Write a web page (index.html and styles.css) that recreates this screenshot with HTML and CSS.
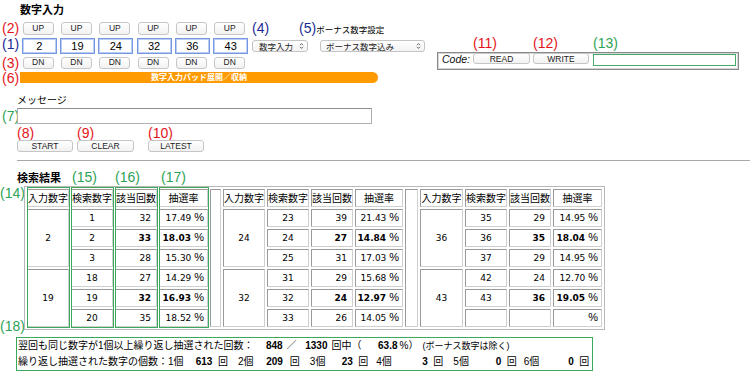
FILE: index.html
```html
<!DOCTYPE html>
<html lang="ja">
<head>
    <meta charset="UTF-8">
    <title>数字入力</title>
    <link rel="stylesheet" href="styles.css">
</head>
<body>
    <h2 class="title">数字入力</h2>
    <div class="top">
        <div class="pad">
            <span class="tag red">(2)</span>
            <button class="btn">UP</button>
            <button class="btn">UP</button>
            <button class="btn">UP</button>
            <button class="btn">UP</button>
            <button class="btn">UP</button>
            <button class="btn">UP</button>
            <span class="tag blue">(1)</span>
            <input class="num" type="text" value="2">
            <input class="num" type="text" value="19">
            <input class="num" type="text" value="24">
            <input class="num" type="text" value="32">
            <input class="num" type="text" value="36">
            <input class="num" type="text" value="43">
            <span class="tag red">(3)</span>
            <button class="btn">DN</button>
            <button class="btn">DN</button>
            <button class="btn">DN</button>
            <button class="btn">DN</button>
            <button class="btn">DN</button>
            <button class="btn">DN</button>
        </div>
        <div class="opts">
            <div class="opt-labels">
                <span class="tag blue">(4)</span>
                <span class="tag blue l5">(5)</span><span class="small">ボーナス数字設定</span>
            </div>
            <div class="opt-selects">
                <div class="select s1"><span>数字入力</span><svg width="5" height="8" viewBox="0 0 5 8"><path d="M1 3.2 2.5 1.6 4 3.2M1 4.8 2.5 6.4 4 4.8" fill="none" stroke="#555" stroke-width="0.9"/></svg></div>
                <div class="select s2"><span>ボーナス数字込み</span><svg width="5" height="8" viewBox="0 0 5 8"><path d="M1 3.2 2.5 1.6 4 3.2M1 4.8 2.5 6.4 4 4.8" fill="none" stroke="#555" stroke-width="0.9"/></svg></div>
            </div>
        </div>
        <div class="code">
            <div class="code-tags">
                <span class="tag red">(11)</span>
                <span class="tag red">(12)</span>
                <span class="tag green">(13)</span>
            </div>
            <div class="code-box">
                <i class="code-label">Code:</i>
                <button class="btn read">READ</button>
                <button class="btn write">WRITE</button>
                <input class="code-input" type="text">
            </div>
        </div>
    </div>
    <div class="bar-row">
        <span class="tag red">(6)</span>
        <div class="bar">数字入力パッド展開／収納</div>
    </div>

    <div class="msg-label">メッセージ</div>
    <div class="msg-row">
        <span class="tag green">(7)</span>
        <input class="msg-input" type="text">
    </div>
    <div class="actions">
        <div class="act start"><span class="tag red">(8)</span><button class="btn">START</button></div>
        <div class="act clear"><span class="tag red">(9)</span><button class="btn">CLEAR</button></div>
        <div class="act latest"><span class="tag red">(10)</span><button class="btn">LATEST</button></div>
    </div>
    <div class="rule"></div>

    <div class="result-head">
        <h2>検索結果</h2>
        <span class="tag green c15">(15)</span>
        <span class="tag green c16">(16)</span>
        <span class="tag green">(17)</span>
    </div>
    <div class="result-row">
        <div class="side">
            <span class="tag green t14">(14)</span>
            <span class="tag green t18">(18)</span>
        </div>
        <table class="res">
            <tr>
                <th class="w42">入力数字</th><th class="w42">検索数字</th><th class="w42">該当回数</th><th class="w49">抽選率</th>
                <td class="gap w11" rowspan="7"></td>
                <th class="w42">入力数字</th><th class="w42">検索数字</th><th class="w42">該当回数</th><th class="w48">抽選率</th>
                <td class="gap w13" rowspan="7"></td>
                <th class="w43">入力数字</th><th class="w42">検索数字</th><th class="w42">該当回数</th><th class="w49">抽選率</th>
            </tr>
            <tr>
                <td rowspan="3">2</td><td>1</td><td class="cnt">32</td><td class="rate">17.49 <span class="pct">%</span></td>
                <td rowspan="3">24</td><td>23</td><td class="cnt">39</td><td class="rate">21.43 <span class="pct">%</span></td>
                <td rowspan="3">36</td><td>35</td><td class="cnt">29</td><td class="rate">14.95 <span class="pct">%</span></td>
            </tr>
            <tr>
                <td>2</td><td class="cnt hit">33</td><td class="rate hit">18.03 <span class="pct">%</span></td>
                <td>24</td><td class="cnt hit">27</td><td class="rate hit">14.84 <span class="pct">%</span></td>
                <td>36</td><td class="cnt hit">35</td><td class="rate hit">18.04 <span class="pct">%</span></td>
            </tr>
            <tr>
                <td>3</td><td class="cnt">28</td><td class="rate">15.30 <span class="pct">%</span></td>
                <td>25</td><td class="cnt">31</td><td class="rate">17.03 <span class="pct">%</span></td>
                <td>37</td><td class="cnt">29</td><td class="rate">14.95 <span class="pct">%</span></td>
            </tr>
            <tr>
                <td rowspan="3">19</td><td>18</td><td class="cnt">27</td><td class="rate">14.29 <span class="pct">%</span></td>
                <td rowspan="3">32</td><td>31</td><td class="cnt">29</td><td class="rate">15.68 <span class="pct">%</span></td>
                <td rowspan="3">43</td><td>42</td><td class="cnt">24</td><td class="rate">12.70 <span class="pct">%</span></td>
            </tr>
            <tr>
                <td>19</td><td class="cnt hit">32</td><td class="rate hit">16.93 <span class="pct">%</span></td>
                <td>32</td><td class="cnt hit">24</td><td class="rate hit">12.97 <span class="pct">%</span></td>
                <td>43</td><td class="cnt hit">36</td><td class="rate hit">19.05 <span class="pct">%</span></td>
            </tr>
            <tr>
                <td>20</td><td class="cnt">35</td><td class="rate">18.52 <span class="pct">%</span></td>
                <td>33</td><td class="cnt">26</td><td class="rate">14.05 <span class="pct">%</span></td>
                <td></td><td class="cnt"></td><td class="rate"><span class="pct">%</span></td>
            </tr>
        </table>
        <div class="mark m1"></div>
        <div class="mark m2"></div>
        <div class="mark m3"></div>
        <div class="mark m4"></div>
    </div>

    <div class="summary">
        <div class="line">
            <span class="t1">翌回も同じ数字が1個以上繰り返し抽選された回数：</span>
            <span class="n w16">848</span>
            <span class="slash">／</span>
            <span class="n w30">1330</span>
            <span class="of">回中（</span>
            <span class="n w36">63.8</span>
            <span class="pc">%）</span>
            <span class="note">(ボーナス数字は除く)</span>
        </div>
        <div class="line">
            <span class="t2">繰り返し抽選された数字の個数：1個</span>
            <span class="n w29">613</span><span class="u">回</span>
            <span class="k">2個</span><span class="n w29">209</span><span class="u u7">回</span>
            <span class="k">3個</span><span class="n w27">23</span><span class="u">回</span>
            <span class="k k8">4個</span><span class="n w36">3</span><span class="u">回</span>
            <span class="k">5個</span><span class="n w32">0</span><span class="u">回</span>
            <span class="k k7">6個</span><span class="n w34">0</span><span class="u">回</span>
        </div>
    </div>
</body>
</html>
```

FILE: styles.css
```css
body {
    margin: 0;
    font-family: "Liberation Sans", "Noto Sans CJK JP", sans-serif;
    font-size: 10px;
    color: #000;
    background: #fff;
}
.tag {
    font-family: "Liberation Sans", sans-serif;
    font-size: 14px;
    line-height: 13px;
    white-space: nowrap;
}
.red { color: #e3151a; }
.blue { color: #1b2a94; }
.green { color: #2ea356; }

.title {
    margin: 4px 0 0 20px;
    font-size: 11px;
    line-height: 13px;
    font-weight: bold;
}
.top {
    display: flex;
    align-items: flex-start;
    margin-top: 4.7px;
}
.pad {
    display: grid;
    grid-template-columns: 18.4px repeat(6, 35px);
    grid-template-rows: 13px 16px 12px;
    column-gap: 3.3px;
    row-gap: 3px;
}
.pad .tag {
    padding-left: 2px;
}
.btn {
    font-family: "Liberation Sans", sans-serif;
    font-size: 8.5px;
    line-height: 1;
    color: #222;
    background: linear-gradient(#fff, #f2f2f2);
    border: 1px solid #c6c6c6;
    border-radius: 3px;
    padding: 0;
    margin: 0;
}
.pad .btn {
    width: 31px;
    margin-left: 1px;
}
.num {
    width: 35px;
    height: 16px;
    box-sizing: border-box;
    margin: 0;
    padding: 0;
    border: 1px solid #7597e4;
    box-shadow: inset 0 0 0 1px #bccdf3;
    text-align: center;
    font-family: "Liberation Sans", sans-serif;
    font-size: 11px;
    color: #000;
}
.opts {
    margin-left: 3.8px;
    display: grid;
    grid-template-rows: 13px 16px;
    row-gap: 3px;
}
.opt-labels {
    display: flex;
    align-items: baseline;
}
.opt-labels .l5 {
    margin-left: 30px;
}
.small {
    font-size: 8.5px;
}
.opt-selects {
    display: flex;
    align-items: center;
    gap: 12px;
}
.select {
    height: 12px;
    box-sizing: border-box;
    border: 1px solid #c4c4c4;
    border-radius: 3px;
    background: linear-gradient(#fff, #f3f3f3);
    display: flex;
    align-items: center;
    justify-content: space-between;
    padding: 0 3px 0 6px;
    font-size: 8.5px;
    color: #222;
}
.s1 { width: 56px; }
.s2 { width: 105px; padding-left: 5px; }

.code {
    margin-left: 12px;
    margin-top: 15.3px;
    width: 302px;
}
.code-tags {
    display: flex;
    padding-left: 36px;
}
.code-tags .tag {
    width: 60px;
}
.code-box {
    margin-top: 2px;
    height: 18px;
    box-sizing: border-box;
    border: 1px solid #8a8a8a;
    box-shadow: inset 0 0 0 1px #d4d4d4;
    display: flex;
    align-items: flex-start;
    padding: 0.5px 0 0 4px;
}
.code-label {
    display: inline-block;
    width: 31px;
    font-size: 10.5px;
    line-height: 12px;
    color: #111;
}
.read { width: 57px; height: 11px; margin-right: 3px; }
.write { width: 56px; height: 11px; margin-right: 4px; }
.code-input {
    width: 143px;
    height: 12px;
    box-sizing: border-box;
    margin: 1px 0 0;
    padding: 0;
    border: 1.5px solid #43ad67;
}

.bar-row {
    display: flex;
    margin-top: 2px;
    height: 11px;
}
.bar-row .tag {
    width: 20px;
    padding-left: 2px;
    box-sizing: border-box;
    line-height: 12px;
}
.bar {
    width: 358px;
    height: 11px;
    background: #ff9a00;
    border-radius: 0 6px 6px 0;
    color: #fff;
    font-size: 8px;
    font-weight: bold;
    line-height: 11px;
    text-align: center;
}

.msg-label {
    margin: 12px 0 0 17px;
    font-size: 10px;
    line-height: 12px;
}
.msg-row {
    display: flex;
    margin-top: 1px;
}
.msg-row .tag {
    width: 17px;
    padding-left: 2px;
    box-sizing: border-box;
    line-height: 16px;
}
.msg-input {
    width: 355px;
    height: 16px;
    box-sizing: border-box;
    margin: 0;
    padding: 0;
    border: 1px solid #b0b0b0;
    border-top-color: #8c8c8c;
}
.actions {
    display: flex;
    margin: 3.5px 0 0 17px;
}
.act {
    display: flex;
    flex-direction: column;
    align-items: flex-start;
}
.act .btn { height: 12px; }
.start .btn { width: 56px; }
.clear { margin-left: 4px; }
.clear .btn { width: 57px; }
.latest { margin-left: 14px; }
.latest .btn { width: 56px; }
.rule {
    margin: 7.5px 0 0 17px;
    border-top: 1px solid #a8a8a8;
}

.result-head {
    display: flex;
    align-items: baseline;
    margin: 10px 0 0 17px;
    line-height: 14px;
}
.result-head h2 {
    margin: 0;
    width: 55px;
    font-size: 11px;
    line-height: 14px;
}
.c15 { width: 43px; }
.c16 { width: 46px; }

.result-row {
    position: relative;
    display: flex;
    margin-top: 1px;
}
.side {
    width: 24px;
    display: flex;
    flex-direction: column;
    justify-content: space-between;
}
.t14 { margin-top: 1px; line-height: 12px; }
.t18 { margin-bottom: -3px; }

.res {
    border-collapse: separate;
    border-spacing: 2px;
    border: 1px solid #b8b8b8;
}
.res tr { height: 18px; }
.res th, .res td {
    box-sizing: border-box;
    padding: 0;
    border: 1px solid;
    border-color: #9a9a9a #cfcfcf #cfcfcf #9a9a9a;
}
.res th {
    font-family: "Noto Sans CJK JP", sans-serif;
    font-size: 10px;
    font-weight: normal;
    line-height: 14px;
    white-space: nowrap;
}
.res td {
    font-family: "DejaVu Sans", sans-serif;
    font-size: 9px;
    line-height: 14px;
    text-align: center;
    white-space: nowrap;
}
.res td.cnt { text-align: right; padding-right: 5px; }
.res td.rate { text-align: right; padding-right: 3px; }
.res .hit { font-weight: bold; }
.res .pct {
    font-family: "Liberation Sans", sans-serif;
    font-size: 11px;
    font-weight: normal;
}
.w11 { width: 11px; }
.w13 { width: 13px; }
.w42 { width: 42px; }
.w43 { width: 43px; }
.w48 { width: 48px; }
.w49 { width: 49px; }

.mark {
    position: absolute;
    top: 1px;
    height: 141px;
    box-sizing: border-box;
    border: 1.5px solid #3aa95c;
}
.m1 { left: 26.5px; width: 43px; }
.m2 { left: 70.5px; width: 43px; }
.m3 { left: 114.5px; width: 43px; }
.m4 { left: 158.5px; width: 50px; }

.summary {
    margin: 7px 0 0 16px;
    width: 577px;
    box-sizing: border-box;
    border: 1.5px solid #3aa95c;
    padding-left: 1px;
}
.line {
    display: flex;
    align-items: baseline;
    line-height: 16px;
    white-space: nowrap;
}
.t1 { width: 248px; }
.t2 { width: 165px; }
.n {
    display: inline-block;
    text-align: right;
    font-weight: bold;
}
.w16 { width: 16px; }
.w27 { width: 27.4px; }
.w29 { width: 29.4px; }
.w30 { width: 30.5px; }
.w32 { width: 32.4px; }
.w34 { width: 34.4px; }
.w36 { width: 36px; }
.slash { margin-left: 4.5px; width: 10.5px; }
.of { margin-left: 4px; width: 30px; }
.pc { margin-left: 2px; }
.note { margin-left: 4px; font-size: 9px; }
.u { margin-left: 5.5px; }
.u7 { margin-left: 7px; }
.k { margin-left: 10px; }
.k8 { margin-left: 8px; }
.k7 { margin-left: 7px; }
```
